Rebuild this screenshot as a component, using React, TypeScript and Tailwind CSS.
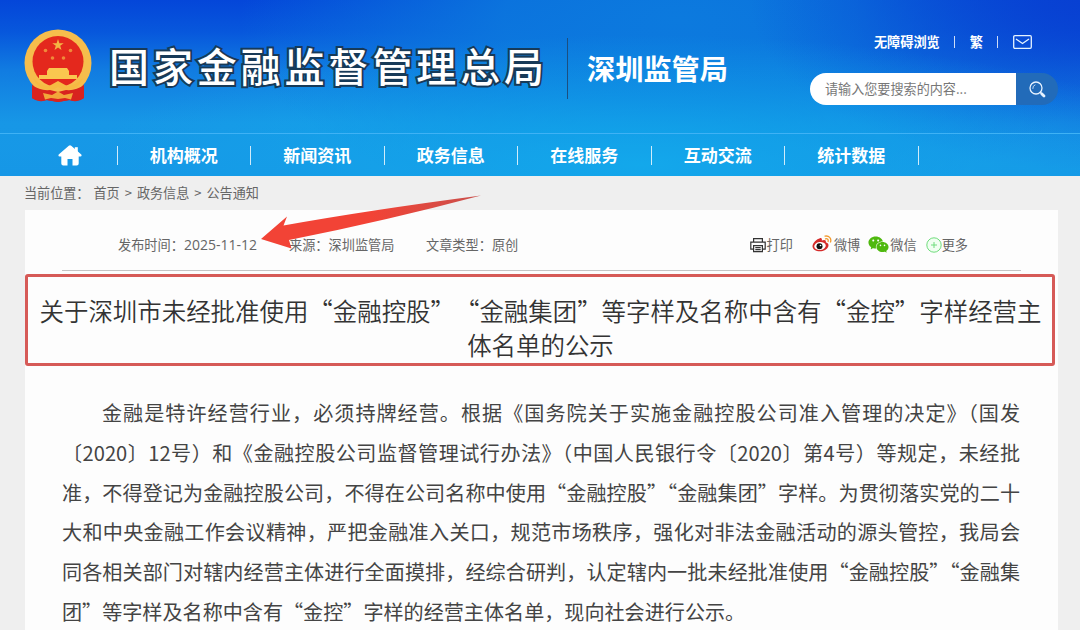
import clsx from "clsx";
import { AiFillWechat } from "react-icons/ai";

const navItems = ["机构概况", "新闻资讯", "政务信息", "在线服务", "互动交流", "统计数据"];

const paragraph = [
    "金融是特许经营行业，必须持牌经营。根据《国务院关于实施金融控股公司准入管理的决定》（国发",
    "〔2020〕12号）和《金融控股公司监督管理试行办法》（中国人民银行令〔2020〕第4号）等规定，未经批",
    "准，不得登记为金融控股公司，不得在公司名称中使用“金融控股”“金融集团”字样。为贯彻落实党的二十",
    "大和中央金融工作会议精神，严把金融准入关口，规范市场秩序，强化对非法金融活动的源头管控，我局会",
    "同各相关部门对辖内经营主体进行全面摸排，经综合研判，认定辖内一批未经批准使用“金融控股”“金融集",
    "团”等字样及名称中含有“金控”字样的经营主体名单，现向社会进行公示。",
];

function Emblem() {
    return (
        <svg className="h-[74px] w-[68px] shrink-0" viewBox="0 0 68 74">
            <path d="M9 48 L8 69 Q14 74 22 71 L34 73 L46 71 Q54 74 60 69 L59 48 Z" fill="#d4201f" />
            <circle cx="34" cy="34" r="33.500" fill="#f6bd4c" />
            <circle cx="34" cy="32.500" r="25.500" fill="#e4281d" />
            <path d="M34 10 L35.400 14.200 L39.700 14.200 L36.200 16.800 L37.500 21 L34 18.400 L30.500 21 L31.800 16.800 L28.300 14.200 L32.600 14.200 Z" fill="#f4b645" />
            <g fill="#f08a3a">
                <circle cx="21.500" cy="21.500" r="1.800" />
                <circle cx="46.500" cy="21.500" r="1.800" />
                <circle cx="28.500" cy="29" r="1.800" />
                <circle cx="39.500" cy="29" r="1.800" />
            </g>
            <path d="M25 39 H43 L45 42 V46 H53 V50 H15 V46 H23 V42 Z" fill="#fac74f" />
            <path d="M8 56 Q16 62 26 61 L34 63 L42 61 Q52 62 60 56 L60 69 Q52 74 45 71 L34 73 L23 71 Q16 74 8 69 Z" fill="#d8231f" />
            <path d="M9 49 Q17 57 25 57 L34 52 L43 57 Q51 57 59 49 Q54 61 43 61 Q38 61 34 58 Q30 61 25 61 Q14 61 9 49 Z" fill="#f6ba42" />
            <path d="M19 64 L28 66 L34 62.500 L40 66 L49 64 L47 70.500 L41 69 L34 70 L27 69 L21 70.500 Z" fill="#f2a63a" />
        </svg>
    );
}

function HomeIcon() {
    return (
        <svg className="h-[21px] w-6" viewBox="0 0 24 21" fill="#fff">
            <path d="M10.800 0.700 Q12 -0.200 13.200 0.700 L23.300 9.500 Q24.200 11.200 22.300 11.500 H20.700 V18.500 Q20.700 20.500 18.700 20.500 H14.500 V14 H9.500 V20.500 H5.300 Q3.300 20.500 3.300 18.500 V11.500 H1.700 Q-0.200 11.200 0.700 9.500 Z" />
            <path d="M16.800 2.200 H19.800 V8 H16.800 Z" />
        </svg>
    );
}

function PrintIcon() {
    return (
        <svg className="h-4 w-4" viewBox="0 0 16 16" fill="none" stroke="#333" strokeWidth="1.200">
            <path d="M3.600 5 V1.600 H12.400 V5" />
            <path d="M3.500 12.200 H0.800 V5.200 H15.200 V12.200 H12.500" />
            <path d="M3.600 8.600 H12.400 V14.600 H3.600 Z" />
            <path d="M5.300 10.700 H10.700 M5.300 12.700 H10.700" />
        </svg>
    );
}

function WeiboIcon() {
    return (
        <svg className="-mt-[3px] h-[17px] w-5" viewBox="0 0 20 17">
            <path d="M8 3.200 C9.500 2.800 10.300 3.800 9.800 5.400 C12.500 4.300 14.500 5 13.800 7.200 C16 7.800 17 9.500 16.300 11.500 C15.200 14.500 11.700 16.300 8 16.300 C3.800 16.300 0.500 14.300 0.500 11.300 C0.500 8 4.800 3.800 8 3.200 Z" fill="#d52b2a" />
            <ellipse cx="8" cy="11" rx="5.800" ry="4" fill="#fff" transform="rotate(-8 8 11)" />
            <circle cx="7.500" cy="11.300" r="3" fill="#111" />
            <circle cx="8.500" cy="10.500" r="0.800" fill="#fff" />
            <g fill="none" stroke="#f29a2e" strokeWidth="1.300" strokeLinecap="round">
                <path d="M13 1.200 C16.800 0.200 19.800 3.400 18.500 7" />
                <path d="M13.500 3.800 C15.400 3.400 16.700 4.700 16.100 6.500" />
            </g>
        </svg>
    );
}

function MoreIcon() {
    return (
        <svg className="h-4 w-4" viewBox="0 0 16 16" fill="none" stroke="#6fdc7c">
            <circle cx="8" cy="8" r="7.200" fill="#f0fff1" />
            <path d="M8 5 V11 M5 8 H11" />
        </svg>
    );
}

function MailIcon() {
    return (
        <svg className="h-[14px] w-[19px]" viewBox="0 0 19 14" fill="none" stroke="#e6f3ff" strokeWidth="1.300">
            <rect x="0.700" y="0.700" width="17.600" height="12.600" rx="1.200" />
            <path d="M3 4 L9.500 8.500 L16 4" />
        </svg>
    );
}

function SearchIcon() {
    return (
        <svg className="h-[17px] w-[17px]" viewBox="0 0 17 17" fill="none" stroke="#e8f3ff" strokeLinecap="round">
            <circle cx="7" cy="7" r="6" strokeWidth="1.300" />
            <path d="M3.800 7.500 A3.400 3.400 0 0 1 6 3.900" strokeWidth="0.800" />
            <path d="M11.300 11.300 L12.500 12.500" strokeWidth="1.300" />
            <path d="M12.700 12.700 L15 15" strokeWidth="2.800" />
        </svg>
    );
}

function Header() {
    return (
        <header className="h-44 bg-[radial-gradient(ellipse_560px_130px_at_640px_165px,#12aaeb_0%,#12aaeb00_100%),radial-gradient(ellipse_330px_170px_at_1080px_0px,#0840d2_0%,#0840d200_100%),radial-gradient(ellipse_440px_200px_at_680px_20px,#0c7ade_0%,#0c7adedd_40%,#0c7ade00_100%),linear-gradient(180deg,#0446d9_0%,#0757dc_18%,#117ce1_40%,#1797e6_70%,#1695e5_100%)] text-white">
            <div className="flex h-[133px]">
                <div className="flex pt-[29px] pl-6">
                    <Emblem />
                    <h1 className="ml-[17px] h-[58px] text-[40px] leading-[73px] font-medium tracking-[3.900px] whitespace-nowrap [-webkit-text-stroke:4px_#173a58] [paint-order:stroke_fill]">
                        国家金融监督管理总局
                    </h1>
                    <div className="mt-[9px] ml-[19px] h-[61px] w-px bg-[#1c4f80]" />
                    <p className="ml-[19px] text-[28.200px] leading-[77px] font-bold whitespace-nowrap">深圳监管局</p>
                </div>
                <div className="mr-[22px] ml-auto flex flex-col">
                    <div className="mt-8 mr-[26px] flex h-5 items-center justify-end text-[13.200px] font-bold">
                        <span>无障碍浏览</span>
                        <span className="ml-[14px] h-3 w-px bg-white/80" />
                        <span className="ml-[15px]">繁</span>
                        <span className="mr-[15px] ml-[14px] h-3 w-px bg-white/80" />
                        <MailIcon />
                    </div>
                    <div className="mt-[21px] flex h-8 w-[248px] overflow-hidden rounded-full">
                        <div className="flex w-[206px] items-center bg-white pl-[15px] text-[13.100px] text-[#777]">请输入您要搜索的内容...</div>
                        <button className="flex flex-1 items-center justify-center bg-[#226bb9]">
                            <SearchIcon />
                        </button>
                    </div>
                </div>
            </div>
            <nav className="flex h-[43px] items-center border-t border-[#3fb2f5] bg-[#1aa0ea]/20">
                <div className="flex w-[116.500px] justify-end pr-[34.500px]">
                    <HomeIcon />
                </div>
                <span className="h-[19px] w-px bg-white/80" />
                {navItems.map((item) => (
                    <a key={item} className="flex h-[19px] w-[133.500px] items-center justify-center border-r border-white/80 text-[17px] font-bold">
                        {item}
                    </a>
                ))}
            </nav>
        </header>
    );
}

function ArticleMeta() {
    return (
        <div className="mx-[37px] flex h-[61px] items-center border-b border-[#c4c4c4] pt-[10px] pr-[53px] pl-14 text-[13.200px] whitespace-nowrap text-[#666]">
            <span className="w-[171px]">
                发布时间：<span className="font-['Open_Sans'] text-[14px] leading-none">2025-11-12</span>
            </span>
            <span className="w-[137px]">来源：深圳监管局</span>
            <span>文章类型：原创</span>
            <div className="ml-auto flex items-center">
                <PrintIcon />
                <span className="mr-[19px] ml-px">打印</span>
                <WeiboIcon />
                <span className="mr-[7px] ml-[2px]">微博</span>
                <AiFillWechat className="-mt-px h-[23px] w-[23px] text-[#4fb90f]" />
                <span className="mr-[9px]">微信</span>
                <MoreIcon />
                <span>更多</span>
            </div>
        </div>
    );
}

function Arrow() {
    return (
        <svg className="pointer-events-none absolute top-[190px] left-[260px] h-[62px] w-[224px]" viewBox="260 190 224 62">
            <defs>
                <linearGradient id="arrow" x1="0" x2="1">
                    <stop offset="0.500" stopColor="#f24336" />
                    <stop offset="1" stopColor="#c9504c" />
                </linearGradient>
            </defs>
            <path d="M261 239 L287 216.500 L283.500 225.500 Q370 210 481 195.500 Q385 221 289 240 L291.500 248.500 Z" fill="url(#arrow)" />
        </svg>
    );
}

export default function App() {
    return (
        <div className="relative h-[630px] w-[1080px] overflow-hidden bg-[#efefef] font-['Noto_Sans_CJK_SC',sans-serif]">
            <Header />
            <div className="flex h-[34px] items-center pl-6 text-[13.100px] whitespace-pre text-[#666]">
                <span className="mr-1">当前位置：</span>
                <span>首页</span>
                <span className="mx-[5px] text-[13px]">&gt;</span>
                <span>政务信息</span>
                <span className="mx-[5px] text-[13px]">&gt;</span>
                <span>公告通知</span>
            </div>
            <main className="ml-[25px] h-[420px] w-[1033px] bg-[#fdfdfd]">
                <ArticleMeta />
                <h2 className="mt-[3px] h-[92px] w-[1030px] rounded-[3px] border-[3px] border-[#d65a57] pt-[17px] pl-px text-center text-[24.440px] leading-[34px] font-[350] whitespace-nowrap text-[#333] [text-spacing-trim:space-all]">
                    关于深圳市未经批准使用“金融控股”“金融集团”等字样及名称中含有“金控”字样经营主
                    <br />
                    体名单的公示
                </h2>
                <div className="mt-[27px] ml-[37px] w-[958px] text-[20.100px] leading-[39.800px] text-[#444]">
                    {paragraph.map((line, i) => (
                        <p
                            key={i}
                            className={clsx(
                                "whitespace-nowrap",
                                i === 0 && "pl-10",
                                i < paragraph.length - 1 && "[text-align-last:justify]"
                            )}
                        >
                            {line}
                        </p>
                    ))}
                </div>
            </main>
            <Arrow />
        </div>
    );
}
